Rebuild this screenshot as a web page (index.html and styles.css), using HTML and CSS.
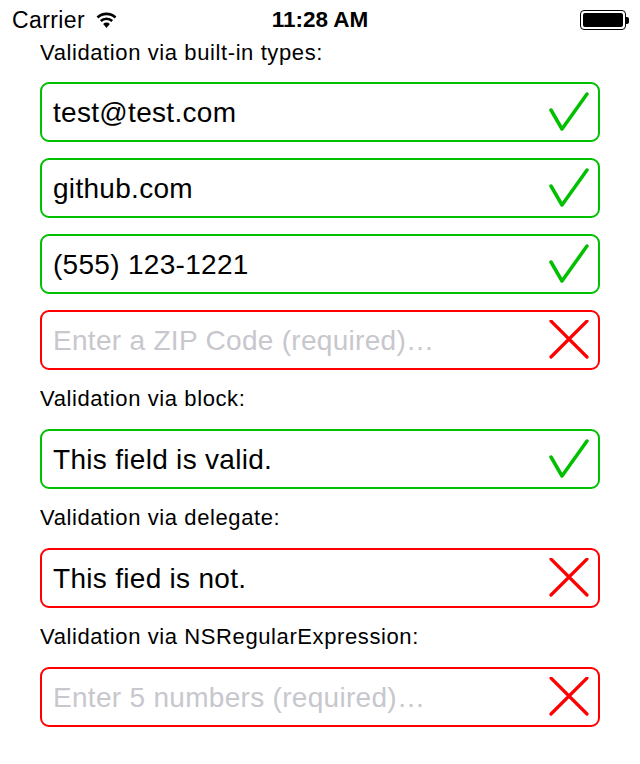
FILE: index.html
```html
<!DOCTYPE html>
<html>
<head>
<meta charset="utf-8">
<link rel="stylesheet" href="styles.css">
</head>
<body>
<div class="status">
  <div class="left">
    <span class="carrier">Carrier</span>
    <svg class="wifi" width="21" height="18" viewBox="0 0 21 18">
      <path d="M1.5 6.5 A13 13 0 0 1 19.5 6.5" fill="none" stroke="#000" stroke-width="2.6"/>
      <path d="M4.8 10 A8.2 8.2 0 0 1 16.2 10" fill="none" stroke="#000" stroke-width="2.6"/>
      <path d="M7.2 13 A4.5 4.5 0 0 1 13.8 13 L10.5 17 Z" fill="#000"/>
    </svg>
  </div>
  <div class="time">11:28 AM</div>
  <div class="right">
    <div class="battery"><div class="level"></div></div>
    <div class="nub"></div>
  </div>
</div>

<div class="content">
  <div class="label">Validation via built-in types:</div>
  <div class="field valid"><span class="text">test@test.com</span>
    <svg class="icon" viewBox="0 0 40 40"><path d="M2 18 L13 37 L38 2" fill="none" stroke="#00c000" stroke-width="3.5" stroke-linejoin="round" stroke-linecap="round"/></svg>
  </div>
  <div class="field valid"><span class="text">github.com</span>
    <svg class="icon" viewBox="0 0 40 40"><path d="M2 18 L13 37 L38 2" fill="none" stroke="#00c000" stroke-width="3.5" stroke-linejoin="round" stroke-linecap="round"/></svg>
  </div>
  <div class="field valid"><span class="text">(555) 123-1221</span>
    <svg class="icon" viewBox="0 0 40 40"><path d="M2 18 L13 37 L38 2" fill="none" stroke="#00c000" stroke-width="3.5" stroke-linejoin="round" stroke-linecap="round"/></svg>
  </div>
  <div class="field invalid"><span class="text placeholder">Enter a ZIP Code (required)…</span>
    <svg class="icon" viewBox="0 0 40 40"><path d="M2 1 L38 37 M38 1 L2 37" fill="none" stroke="#ff0000" stroke-width="3.2" stroke-linecap="round"/></svg>
  </div>

  <div class="label">Validation via block:</div>
  <div class="field valid"><span class="text">This field is valid.</span>
    <svg class="icon" viewBox="0 0 40 40"><path d="M2 18 L13 37 L38 2" fill="none" stroke="#00c000" stroke-width="3.5" stroke-linejoin="round" stroke-linecap="round"/></svg>
  </div>

  <div class="label">Validation via delegate:</div>
  <div class="field invalid"><span class="text">This fied is not.</span>
    <svg class="icon" viewBox="0 0 40 40"><path d="M2 1 L38 37 M38 1 L2 37" fill="none" stroke="#ff0000" stroke-width="3.2" stroke-linecap="round"/></svg>
  </div>

  <div class="label">Validation via NSRegularExpression:</div>
  <div class="field invalid"><span class="text placeholder">Enter 5 numbers (required)…</span>
    <svg class="icon" viewBox="0 0 40 40"><path d="M2 1 L38 37 M38 1 L2 37" fill="none" stroke="#ff0000" stroke-width="3.2" stroke-linecap="round"/></svg>
  </div>
</div>
</body>
</html>
```

FILE: styles.css
```css
html, body {
  margin: 0;
  padding: 0;
  background: #fff;
}
body {
  width: 640px;
  height: 764px;
  overflow: hidden;
  font-family: "Liberation Sans", Arial, sans-serif;
  color: #000;
}
.status {
  height: 40px;
  display: flex;
  align-items: center;
  justify-content: space-between;
  padding: 0 11px 0 12px;
  position: relative;
}
.left {
  display: flex;
  align-items: center;
  gap: 11px;
}
.carrier {
  font-size: 23px;
  letter-spacing: 0.4px;
}
.wifi {
  display: block;
  margin-top: -1px;
}
.time {
  position: absolute;
  left: 0;
  right: 0;
  text-align: center;
  font-weight: bold;
  font-size: 22.5px;
  pointer-events: none;
}
.right {
  display: flex;
  align-items: center;
}
.battery {
  width: 46px;
  height: 20px;
  box-sizing: border-box;
  border: 1.5px solid #000;
  border-radius: 4px;
  padding: 2px;
}
.level {
  width: 100%;
  height: 100%;
  background: #000;
  border-radius: 2px;
}
.nub {
  width: 3px;
  height: 7px;
  background: #000;
  border-radius: 0 2px 2px 0;
}
.content {
  padding: 1px 40px 0 40px;
  display: flex;
  flex-direction: column;
}
.label {
  font-size: 22px;
  letter-spacing: 0.6px;
  line-height: 24px;
  margin: 0 0 17px 0;
}
.field + .label {
  margin-top: 17px;
  margin-bottom: 18px;
}
.field {
  height: 60px;
  box-sizing: border-box;
  border: 2px solid;
  border-radius: 9px;
  display: flex;
  align-items: center;
  justify-content: space-between;
  padding: 0 9px 0 11px;
}
.field + .field {
  margin-top: 16px;
}
.valid { border-color: #00c000; }
.invalid { border-color: #ff0000; }
.text {
  font-size: 28px;
  letter-spacing: 0.3px;
  margin-top: 1px;
}
.placeholder {
  color: #c7c7cd;
}
.icon {
  width: 40px;
  height: 40px;
  display: block;
}
```
